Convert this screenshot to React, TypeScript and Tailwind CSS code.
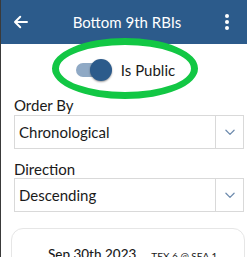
import React from 'react';

const Chevron = () => (
  <svg width="14" height="14" viewBox="0 0 24 24" fill="none" stroke="#6f8cae" strokeWidth="2.2" strokeLinecap="round" strokeLinejoin="round">
    <path d="M5 9l7 7 7-7" />
  </svg>
);

const Select = ({ value }: { value: string }) => (
  <div className="flex h-[34px] border border-[#d9d9d9] bg-white">
    <div className="flex-1 flex items-center pl-[4px] text-[15px] text-[#1a1a1a]">{value}</div>
    <div className="w-[28px] border-l border-[#d9d9d9] flex items-center justify-center">
      <Chevron />
    </div>
  </div>
);

const App = () => {
  return (
    <div className="w-[247px] h-[257px] overflow-hidden bg-white border-l border-[#3a3a3a]" style={{ fontFamily: 'Lato, "Open Sans", sans-serif' }}>
      <div className="h-[44px] bg-[#2c5b8b] flex items-center justify-between px-[11px] text-white">
        <svg width="18" height="18" viewBox="0 0 24 24" fill="none" stroke="white" strokeWidth="2.6" strokeLinecap="round" strokeLinejoin="round">
          <path d="M20 12H5M11 5l-7 7 7 7" />
        </svg>
        <div className="text-[15px] ml-[6px]">Bottom 9th RBIs</div>
        <div className="flex flex-col gap-[2px] items-center w-[18px]">
          <span className="w-[4px] h-[4px] rounded-full bg-white" />
          <span className="w-[4px] h-[4px] rounded-full bg-white" />
          <span className="w-[4px] h-[4px] rounded-full bg-white" />
        </div>
      </div>

      <div className="relative flex justify-center items-center h-[52px] pl-[3px]">
        <div className="absolute left-[51px] top-[-6px] w-[146px] h-[61px] rounded-[50%] border-[7px] border-[#12c744]" />
        <div className="relative w-[34px] h-[14px] rounded-full bg-[#8fa9c5] mr-[11px]">
          <div className="absolute right-[-2px] top-[-4px] w-[22px] h-[22px] rounded-full bg-[#2c5b8b] shadow-[0_1px_2px_rgba(0,0,0,0.4)]" />
        </div>
        <span className="text-[15px] text-[#1a1a1a]">Is Public</span>
      </div>

      <div className="px-[13px] pr-[3px]">
        <div className="text-[15px] text-[#1a1a1a] leading-[18px] mb-[1px]">Order By</div>
        <Select value="Chronological" />
        <div className="text-[15px] text-[#1a1a1a] leading-[18px] mt-[11px] mb-[0px]">Direction</div>
        <Select value="Descending" />
      </div>

      <div className="mt-[16px] ml-[10px] mr-[2px] h-[60px] rounded-t-[12px] border border-[#e6e6e6] flex items-start pt-[17px] pl-[36px]">
        <span className="text-[13.5px] font-medium text-[#1a1a1a] leading-[16px]">Sep 30th 2023</span>
        <span className="text-[10px] text-[#1a1a1a] ml-[15px] mt-[4px] leading-[12px]">TEX 6 @ SEA 1</span>
      </div>
    </div>
  );
};

export default App;
